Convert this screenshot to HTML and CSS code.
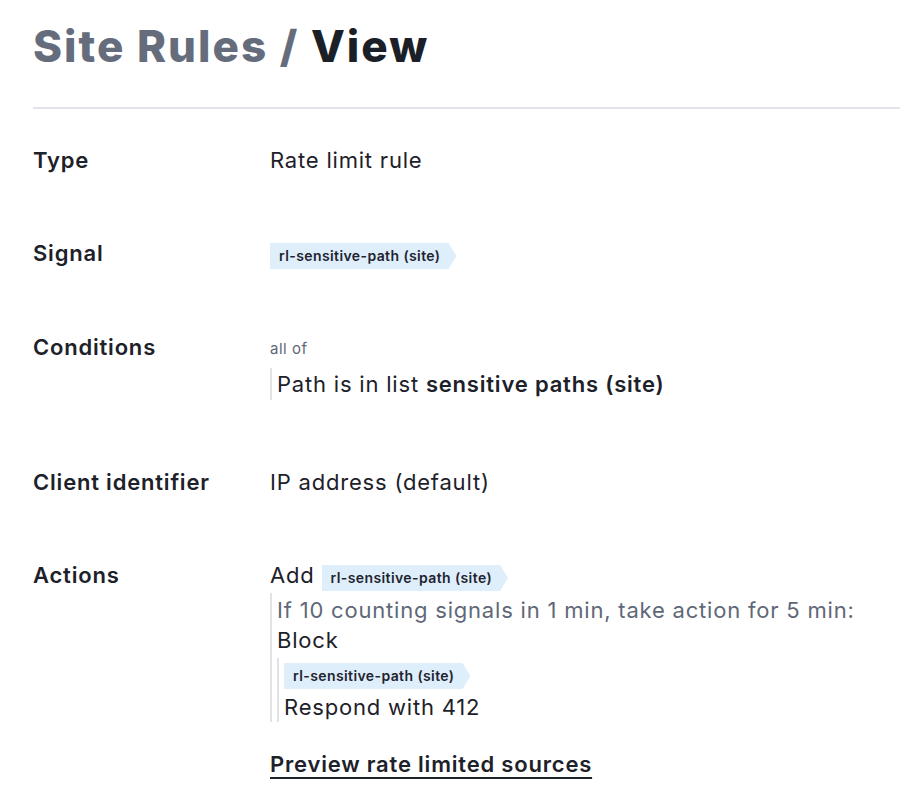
FILE: index.html
```html
<!DOCTYPE html>
<html lang="en">
<head>
<meta charset="utf-8">
<title>Site Rules / View</title>
<link rel="stylesheet" href="styles.css">
</head>
<body>
<main class="page">
  <h1 class="title"><span class="crumb">Site Rules /</span> View</h1>
  <hr class="divider">
  <dl class="rule">
    <dt class="label">Type</dt>
    <dd class="value">Rate limit rule</dd>

    <dt class="label">Signal</dt>
    <dd class="value"><span class="tag">rl-sensitive-path (site)</span></dd>

    <dt class="label">Conditions</dt>
    <dd class="value">
      <div class="group-op">all of</div>
      <div class="branch cond">Path is in list <strong>sensitive paths (site)</strong></div>
    </dd>

    <dt class="label">Client identifier</dt>
    <dd class="value">IP address (default)</dd>

    <dt class="label">Actions</dt>
    <dd class="value">
      <div class="add-line">Add <span class="tag">rl-sensitive-path (site)</span></div>
      <div class="branch actions">
        <div class="muted">If 10 counting signals in 1 min, take action for 5 min:</div>
        <div>Block</div>
        <div class="branch nested">
          <div class="tag-line"><span class="tag">rl-sensitive-path (site)</span></div>
          <div class="respond">Respond with 412</div>
        </div>
      </div>
      <a class="preview" href="#">Preview rate limited sources</a>
    </dd>
  </dl>
</main>
</body>
</html>
```

FILE: styles.css
```css
html, body {
  margin: 0;
  padding: 0;
  background: #ffffff;
}

body {
  font-family: Inter, "Noto Sans", "Liberation Sans", sans-serif;
  color: #1d2129;
}

.page {
  padding: 0 0 40px 33px;
}

.title {
  margin: 20px 0 0;
  font-size: 44px;
  line-height: 53px;
  font-weight: 800;
  letter-spacing: 2px;
  color: #1b1f27;
}

.crumb {
  color: #656d7c;
}

.divider {
  margin: 34px 0 0;
  border: 0;
  height: 2px;
  background: #e2e3e8;
}

.rule {
  display: grid;
  grid-template-columns: 237px 1fr;
  row-gap: 63px;
  margin: 36px 0 0;
  font-size: 22px;
  line-height: 30px;
  letter-spacing: 0.8px;
}

.label {
  margin: 0;
  font-weight: 600;
  color: #1d2129;
}

.value {
  margin: 0;
  color: #1d2129;
}

.tag {
  display: inline-block;
  vertical-align: baseline;
  font-size: 14px;
  line-height: 18px;
  font-weight: 600;
  letter-spacing: 0.4px;
  color: #1f2430;
  background: #deeefa;
  padding: 4px 16px 4px 9px;
  clip-path: polygon(0 0, calc(100% - 8px) 0, 100% 50%, calc(100% - 8px) 100%, 0 100%);
}

.group-op {
  font-size: 15px;
  line-height: 30px;
  letter-spacing: 0.5px;
  padding-top: 2px;
  color: #5f6775;
}

.branch {
  border-left: 2px solid #e0e2e7;
  padding-left: 5px;
}

.cond {
  margin: 4px 0 4px;
  padding-top: 1px;
  padding-bottom: 1px;
}

.cond strong {
  font-weight: 600;
}

.actions {
  margin-top: 2px;
  padding-top: 2px;
}

.muted {
  color: #5f6878;
}

.nested {
  margin-top: 3px;
}

.respond {
  margin-top: 3px;
}

.preview {
  display: inline-block;
  margin-top: 27px;
  font-weight: 600;
  color: #1d2129;
  text-decoration: underline;
  text-decoration-thickness: 2px;
  text-underline-offset: 5px;
}
```
